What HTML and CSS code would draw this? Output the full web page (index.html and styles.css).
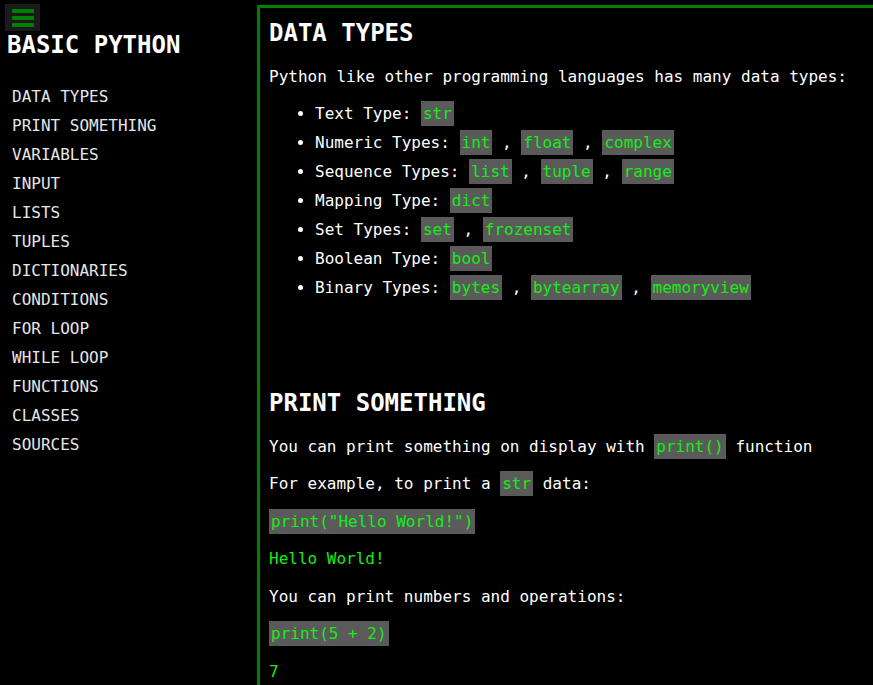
FILE: index.html
```html
<!DOCTYPE html>
<html lang="en">
<head>
<meta charset="utf-8">
<title>Basic Python</title>
<link rel="stylesheet" href="styles.css">
</head>
<body>
<div class="layout">
  <aside class="sidebar">
    <button class="menu-btn" type="button" aria-label="Menu">
      <span class="bar"></span>
      <span class="bar"></span>
      <span class="bar"></span>
    </button>
    <h1 class="site-title">BASIC PYTHON</h1>
    <ul class="nav">
      <li>DATA TYPES</li>
      <li>PRINT SOMETHING</li>
      <li>VARIABLES</li>
      <li>INPUT</li>
      <li>LISTS</li>
      <li>TUPLES</li>
      <li>DICTIONARIES</li>
      <li>CONDITIONS</li>
      <li>FOR LOOP</li>
      <li>WHILE LOOP</li>
      <li>FUNCTIONS</li>
      <li>CLASSES</li>
      <li>SOURCES</li>
    </ul>
  </aside>
  <main class="main">
    <section class="section">
      <h2 class="section-title">DATA TYPES</h2>
      <p class="text intro">Python like other programming languages has many data types:</p>
      <ul class="types">
        <li>Text Type: <code class="code">str</code></li>
        <li>Numeric Types: <code class="code">int</code> , <code class="code">float</code> , <code class="code">complex</code></li>
        <li>Sequence Types: <code class="code">list</code> , <code class="code">tuple</code> , <code class="code">range</code></li>
        <li>Mapping Type: <code class="code">dict</code></li>
        <li>Set Types: <code class="code">set</code> , <code class="code">frozenset</code></li>
        <li>Boolean Type: <code class="code">bool</code></li>
        <li>Binary Types: <code class="code">bytes</code> , <code class="code">bytearray</code> , <code class="code">memoryview</code></li>
      </ul>
    </section>
    <section class="section">
      <h2 class="section-title">PRINT SOMETHING</h2>
      <p class="text">You can print something on display with <code class="code">print()</code> function</p>
      <p class="text">For example, to print a <code class="code">str</code> data:</p>
      <p class="text"><code class="code">print("Hello World!")</code></p>
      <p class="text output">Hello World!</p>
      <p class="text">You can print numbers and operations:</p>
      <p class="text"><code class="code">print(5 + 2)</code></p>
      <p class="text output">7</p>
    </section>
  </main>
</div>
</body>
</html>
```

FILE: styles.css
```css
html, body {
  margin: 0;
  padding: 0;
  overflow: hidden;
  background: #000;
}

body {
  color: #fff;
  font-family: "DejaVu Sans Mono", "Liberation Mono", monospace;
  font-size: 16px;
}

.layout {
  display: flex;
  align-items: flex-start;
  width: 900px;
}

.sidebar {
  width: 257px;
  flex: 0 0 257px;
  padding-top: 4px;
}

.menu-btn {
  display: flex;
  flex-direction: column;
  justify-content: center;
  gap: 3px;
  width: 35px;
  height: 27px;
  margin-left: 5px;
  padding: 0 6px 0 7px;
  border: 0;
  background: #1a1a1a;
}

.bar {
  display: block;
  height: 4px;
  width: 22px;
  background: #008000;
  border-radius: 1px;
}

.site-title {
  margin: 0 0 0 7px;
  font-size: 24px;
  line-height: 28px;
  font-weight: bold;
  color: #fff;
}

.nav {
  list-style: none;
  margin: 23px 0 0;
  padding: 0 0 0 12px;
  color: #e6e6e6;
  line-height: 29px;
}

.main {
  flex: 1;
  margin-top: 5px;
  border: 3px solid #008000;
  padding: 11px 10px 40px 9px;
  min-height: 800px;
}

.section + .section {
  margin-top: 87px;
}

.section-title {
  margin: 0 0 19px;
  font-size: 24px;
  line-height: 28px;
  font-weight: bold;
}

.text {
  margin: 0 0 16px;
  line-height: 21.5px;
}

.text.intro {
  margin-bottom: 11px;
}

.types {
  margin: 0;
  padding-left: 46px;
  line-height: 29px;
}

.code {
  font-family: "DejaVu Sans Mono", "Liberation Mono", monospace;
  font-size: 16px;
  background: #5a5a5a;
  color: #14ee14;
  padding: 3px 2px;
}

.output {
  color: #14ee14;
}
```
